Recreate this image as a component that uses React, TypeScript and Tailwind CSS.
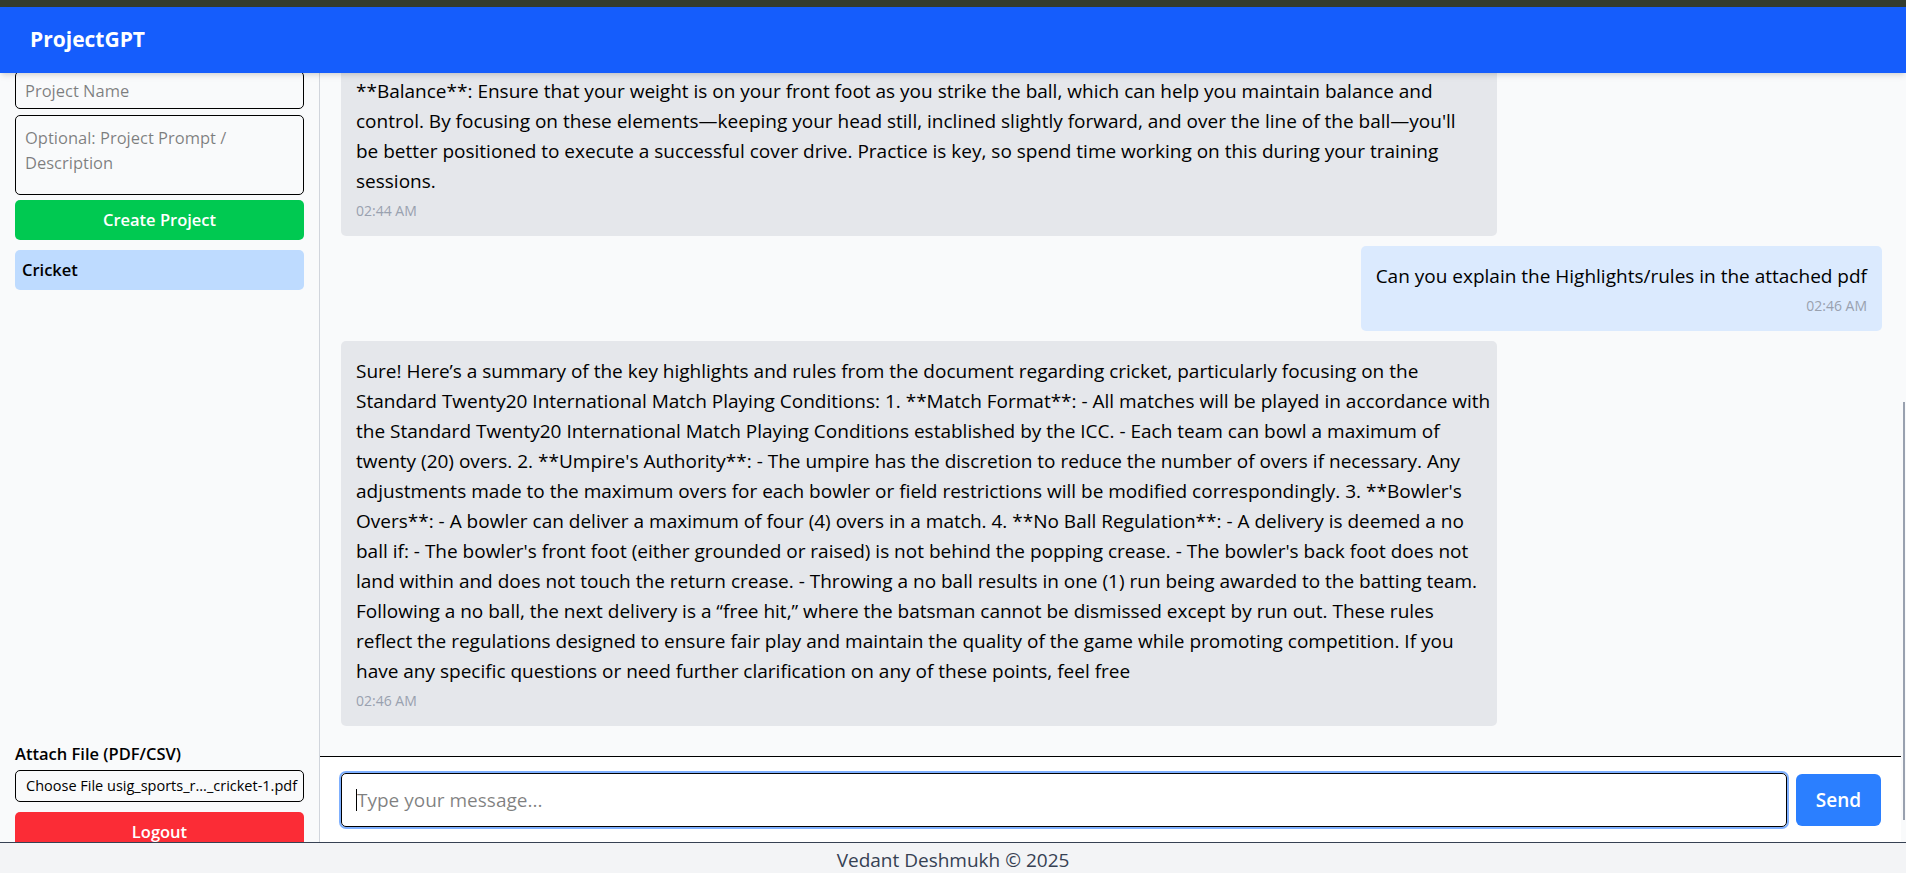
import React from 'react';

type Message = { id: number; text: string; time: string; mine?: boolean };

const messages: Message[] = [
  {
    id: 1,
    time: '02:44 AM',
    text: [
      "**Balance**: Ensure that your weight is on your front foot as you strike the ball, which can help you maintain balance and",
      "control. By focusing on these elements—keeping your head still, inclined slightly forward, and over the line of the ball—you'll",
      'be better positioned to execute a successful cover drive. Practice is key, so spend time working on this during your training',
      'sessions.',
    ].join('\n'),
  },
  { id: 2, time: '02:46 AM', mine: true, text: 'Can you explain the Highlights/rules in the attached pdf' },
  {
    id: 3,
    time: '02:46 AM',
    text: [
      'Sure! Here’s a summary of the key highlights and rules from the document regarding cricket, particularly focusing on the',
      'Standard Twenty20 International Match Playing Conditions: 1. **Match Format**: - All matches will be played in accordance with',
      'the Standard Twenty20 International Match Playing Conditions established by the ICC. - Each team can bowl a maximum of',
      "twenty (20) overs. 2. **Umpire's Authority**: - The umpire has the discretion to reduce the number of overs if necessary. Any",
      "adjustments made to the maximum overs for each bowler or field restrictions will be modified correspondingly. 3. **Bowler's",
      'Overs**: - A bowler can deliver a maximum of four (4) overs in a match. 4. **No Ball Regulation**: - A delivery is deemed a no',
      "ball if: - The bowler's front foot (either grounded or raised) is not behind the popping crease. - The bowler's back foot does not",
      'land within and does not touch the return crease. - Throwing a no ball results in one (1) run being awarded to the batting team.',
      'Following a no ball, the next delivery is a “free hit,” where the batsman cannot be dismissed except by run out. These rules',
      'reflect the regulations designed to ensure fair play and maintain the quality of the game while promoting competition. If you',
      'have any specific questions or need further clarification on any of these points, feel free',
    ].join('\n'),
  },
];

function Bubble({ msg }: { msg: Message }) {
  return (
    <div
      className={
        msg.mine
          ? 'self-end max-w-[75%] shrink-0 rounded-[5px] bg-blue-100 p-[15px]'
          : 'self-start w-3/4 shrink-0 rounded-[5px] bg-gray-200 p-[15px]'
      }
    >
      <p className="whitespace-pre text-[19px] leading-[30px] text-black">{msg.text}</p>
      <p className={`mt-[5px] text-[14px] leading-[20px] text-gray-400 ${msg.mine ? 'text-right' : ''}`}>{msg.time}</p>
    </div>
  );
}

export default function App() {
  return (
    <div className="flex h-screen flex-col overflow-hidden bg-gray-50 font-['Open_Sans',sans-serif] text-black">
      <div className="h-[7px] shrink-0 bg-[#343c2e]" />

      <header className="relative z-10 flex h-[66px] shrink-0 items-center bg-blue-600 px-[30px] shadow-md">
        <h1 className="text-[21px] font-bold text-white">ProjectGPT</h1>
      </header>

      <main className="flex min-h-0 flex-1 overflow-hidden">
        {/* sidebar */}
        <aside className="flex w-[320px] shrink-0 flex-col overflow-hidden border-r border-gray-300 bg-gray-50 px-[15px]">
          <input
            className="-mt-[2px] h-[38px] w-full shrink-0 rounded-[5px] border border-black px-[9px] text-[16.5px] outline-none"
            placeholder="Project Name"
          />
          <textarea
            className="mt-[6px] h-[80px] w-full shrink-0 resize-none rounded-[5px] border border-black px-[9px] py-[9px] text-[16.5px] leading-[25px] outline-none"
            placeholder="Optional: Project Prompt / Description"
          />
          <button className="mt-[5px] h-[40px] w-full shrink-0 rounded-[5px] bg-green-500 text-[16.5px] font-semibold text-white">
            Create Project
          </button>
          <div className="mt-[10px] flex h-[40px] shrink-0 items-center rounded-[5px] bg-blue-200 px-[7px] text-[16.5px] font-semibold">
            Cricket
          </div>

          <div className="mt-auto flex shrink-0 flex-col">
            <label className="block text-[16.5px] font-semibold leading-[25px]">Attach File (PDF/CSV)</label>
            <div className="mt-[4px] flex h-[32px] items-center overflow-hidden whitespace-nowrap rounded-[5px] border border-black px-[10px] text-[14.5px]">
              Choose File usig_sports_r..._cricket-1.pdf
            </div>
            <button className="mt-[10px] -mb-[10px] block h-[40px] w-full rounded-[5px] bg-red-500 text-[16.5px] font-semibold text-white">
              Logout
            </button>
          </div>
        </aside>

        {/* chat */}
        <section className="relative flex min-w-0 flex-1 flex-col bg-gray-50">
          <div className="mr-[5px] flex min-h-0 flex-1 flex-col justify-end gap-[10px] overflow-hidden pb-[30px] pl-[21px] pr-[19px]">
            {messages.map((m) => (
              <Bubble key={m.id} msg={m} />
            ))}
          </div>

          <div className="mr-[5px] flex h-[86px] shrink-0 items-start gap-[9px] border-t border-black bg-white pl-[21px] pr-[20px] pt-[16px]">
            <div className="relative flex-1">
              <input
                className="h-[54px] w-full rounded-[5px] border border-black px-[15px] text-[19px] outline-none ring-2 ring-[#7fb0ff]"
                placeholder="Type your message..."
              />
              <span className="absolute left-[15px] top-[16px] h-[22px] w-px bg-black" />
            </div>
            <button className="mt-[1px] h-[52px] w-[85px] rounded-[6px] bg-blue-500 text-[19px] font-semibold text-white">
              Send
            </button>
          </div>

          {/* scrollbar thumb */}
          <div className="absolute right-[1px] top-[329px] h-[418px] w-[2px] bg-gray-400" />
        </section>
      </main>

      <footer className="h-[31px] shrink-0 overflow-hidden border-t border-gray-700 bg-gray-100 pt-[2px] text-center text-[19px] leading-[30px] text-gray-700">
        Vedant Deshmukh © 2025
      </footer>
    </div>
  );
}
